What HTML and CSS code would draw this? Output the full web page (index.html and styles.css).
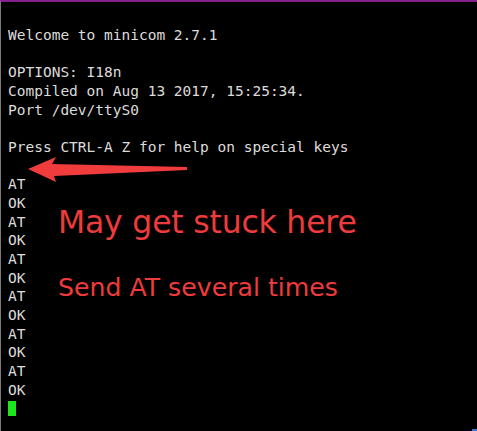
FILE: index.html
```html
<!DOCTYPE html>
<html>
<head>
<meta charset="utf-8">
<link rel="stylesheet" href="styles.css">
</head>
<body>
<div class="term">
<pre class="screen">Welcome to minicom 2.7.1

OPTIONS: I18n
Compiled on Aug 13 2017, 15:25:34.
Port /dev/ttyS0

Press CTRL-A Z for help on special keys

AT
OK
AT
OK
AT
OK
AT
OK
AT
OK
AT
OK
<span class="cursor"></span></pre>
<svg class="arrow" width="200" height="40" viewBox="0 0 200 40">
<path d="M8,14 L36,2 L32,9 L167,12 L167,15 L34,21 L36,27 Z" fill="#f03c3c"/>
</svg>
<div class="note note-big">May get stuck here</div>
<div class="note note-small">Send AT several times</div>
<div class="corner"></div>
</div>
</body>
</html>
```
FILE: styles.css
```css
html, body {
  margin: 0;
  padding: 0;
  background: #000;
}
.term {
  position: relative;
  width: 476px;
  height: 429px;
  background: #000;
  border-top: 2px solid #861f8e;
  border-left: 1px solid #7a7a7a;
  overflow: hidden;
}
.screen {
  margin: 0;
  padding: 24px 0 0 7px;
  font-family: "DejaVu Sans Mono", monospace;
  font-size: 14.5px;
  line-height: 18.67px;
  color: #dcdcdc;
}
.cursor {
  display: inline-block;
  width: 8px;
  height: 15px;
  background: #1ee61e;
  vertical-align: -3px;
}
.arrow {
  position: absolute;
  left: 19px;
  top: 153px;
}
.note {
  position: absolute;
  font-family: Tahoma, "DejaVu Sans", sans-serif;
  color: #ee3b3b;
  white-space: nowrap;
}
.note-big {
  left: 57px;
  top: 202px;
  font-size: 31.5px;
  letter-spacing: -0.2px;
}
.note-small {
  left: 57px;
  top: 271px;
  font-size: 25.2px;
}
.corner {
  position: absolute;
  right: 0;
  bottom: 0;
  width: 5px;
  height: 2px;
  background: #3a78c8;
}
```
